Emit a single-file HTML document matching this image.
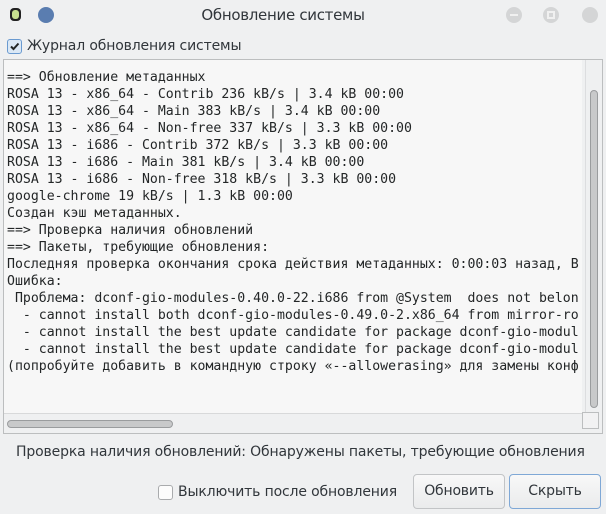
<!DOCTYPE html>
<html><head><meta charset="utf-8"><style>
*{margin:0;padding:0;box-sizing:border-box}
body{width:606px;height:514px;background:#eff0f1;font-family:"DejaVu Sans","Liberation Sans",sans-serif;color:#31363b;position:relative;overflow:hidden}
.abs{position:absolute}
.title{left:0;width:566px;top:6px;text-align:center;font-size:15px;letter-spacing:-0.3px}
.ui{font-size:14px;letter-spacing:-0.15px}
.frame{left:3px;top:59px;width:600px;height:375px;border:1px solid #bcbebf;background:#eff0f1}
.text{left:4px;top:60px;width:578px;height:353px;background:#f7f7f7;overflow:hidden}
pre{font-family:"DejaVu Sans Mono","Liberation Mono",monospace;font-size:13.2px;line-height:17px;color:#232627;position:absolute;left:3px;top:9px;white-space:pre}
.btn{top:474px;height:35px;border:1px solid #c2c4c6;border-radius:4px;background:linear-gradient(#f8f8f8,#eaebec);text-align:center;line-height:33px;font-size:14px;letter-spacing:-0.2px}
</style></head><body>
<div class="abs" style="left:10px;top:8px;width:11px;height:13px;border-radius:4px;background:#222"></div>
<div class="abs" style="left:12px;top:10px;width:7px;height:9px;border-radius:3px;background:#c8e090"></div>
<div class="abs" style="left:38px;top:7px;width:16px;height:16px;border-radius:50%;background:#5a7db0"></div>
<div class="abs title">Обновление системы</div>
<div class="abs" style="left:506px;top:7px;width:16px;height:16px;border-radius:50%;background:#d4d5d6"><div style="position:absolute;left:4px;top:7px;width:8px;height:2px;background:#f0f0f0"></div></div>
<div class="abs" style="left:543px;top:7px;width:16px;height:16px;border-radius:50%;background:#d4d5d6"><div style="position:absolute;left:4px;top:4px;width:8px;height:8px;border:2px solid #f0f0f0"></div></div>
<div class="abs" style="left:582px;top:7px;width:16px;height:16px;border-radius:50%;background:#d4d5d6"></div>

<div class="abs" style="left:7px;top:39px;width:15px;height:15px;border:1px solid #6a9ad0;border-radius:3px;background:#dbe8f5"><svg width="13" height="13" style="position:absolute;left:0;top:0"><path d="M3 6.5l2.5 2.5 5-5.5" stroke="#232627" stroke-width="2" fill="none"/></svg></div>
<div class="abs ui" style="left:27px;top:38px">Журнал обновления системы</div>

<div class="abs frame"></div>
<div class="abs text"><pre>==> Обновление метаданных
ROSA 13 - x86_64 - Contrib 236 kB/s | 3.4 kB 00:00
ROSA 13 - x86_64 - Main 383 kB/s | 3.4 kB 00:00
ROSA 13 - x86_64 - Non-free 337 kB/s | 3.3 kB 00:00
ROSA 13 - i686 - Contrib 372 kB/s | 3.3 kB 00:00
ROSA 13 - i686 - Main 381 kB/s | 3.4 kB 00:00
ROSA 13 - i686 - Non-free 318 kB/s | 3.3 kB 00:00
google-chrome 19 kB/s | 1.3 kB 00:00
Создан кэш метаданных.
==> Проверка наличия обновлений
==> Пакеты, требующие обновления:
Последняя проверка окончания срока действия метаданных: 0:00:03 назад, В
Ошибка:
 Проблема: dconf-gio-modules-0.40.0-22.i686 from @System  does not belon
  - cannot install both dconf-gio-modules-0.49.0-2.x86_64 from mirror-ro
  - cannot install the best update candidate for package dconf-gio-modul
  - cannot install the best update candidate for package dconf-gio-modul
(попробуйте добавить в командную строку «--allowerasing» для замены конф</pre></div>
<div class="abs" style="left:585px;top:60px;width:1px;height:353px;background:#dcdddf"></div>
<div class="abs" style="left:590px;top:90px;width:8px;height:318px;border:1px solid #9a9c9e;border-radius:4px;background:#c8c9ca"></div>
<div class="abs" style="left:4px;top:413px;width:578px;height:1px;background:#d8d9da"></div>
<div class="abs" style="left:7px;top:420px;width:166px;height:8px;border:1px solid #9a9c9e;border-radius:4px;background:#c8c9ca"></div>
<div class="abs" style="left:582px;top:412px;width:17px;height:17px;border:1px solid #bcbebf;background:#f2f2f3"></div>

<div class="abs ui" style="left:16px;top:444px">Проверка наличия обновлений: Обнаружены пакеты, требующие обновления</div>
<div class="abs" style="left:158px;top:485px;width:15px;height:15px;border:1px solid #a9abad;border-radius:3px;background:#fcfcfc"></div>
<div class="abs ui" style="left:178px;top:484px">Выключить после обновления</div>
<div class="abs btn" style="left:413px;width:92px">Обновить</div>
<div class="abs btn" style="left:509px;width:92px;border-color:#7fa8d6">Скрыть</div>
</body></html>
